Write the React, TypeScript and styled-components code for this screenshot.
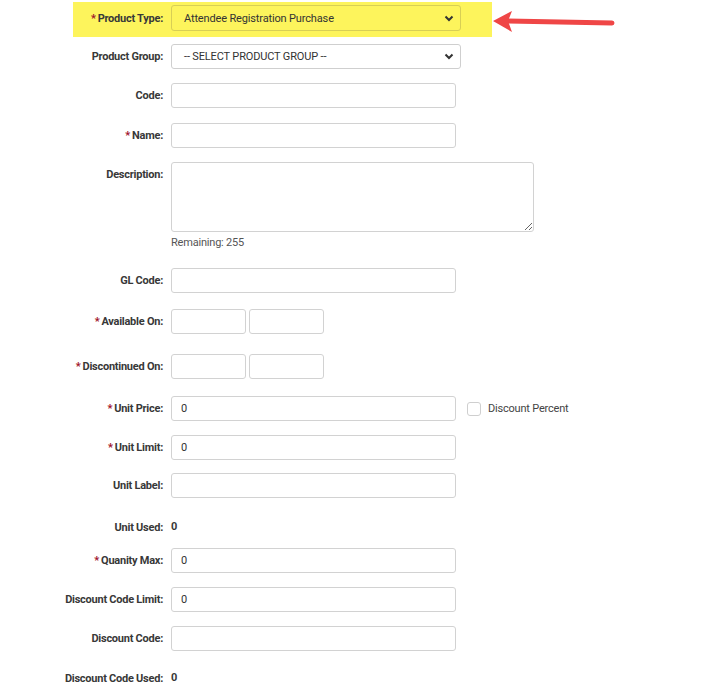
import * as React from 'react'
import styled, { createGlobalStyle } from 'styled-components'

const GlobalStyle = createGlobalStyle`
  body {
    margin: 0;
    background: #fff;
    font-family: Roboto, 'Liberation Sans', Arial, sans-serif;
  }
`

interface Field {
  label: string
  required?: boolean
  top: number
  kind: 'input' | 'select' | 'textarea' | 'dates' | 'static'
  value?: string
  extra?: 'discount'
}

const fields: Field[] = [
  { label: 'Product Group:', top: 6, kind: 'select', value: '-- SELECT PRODUCT GROUP --' },
  { label: 'Code:', top: 14, kind: 'input' },
  { label: 'Name:', required: true, top: 15, kind: 'input' },
  { label: 'Description:', top: 14, kind: 'textarea' },
  { label: 'GL Code:', top: 18, kind: 'input' },
  { label: 'Available On:', required: true, top: 16, kind: 'dates' },
  { label: 'Discontinued On:', required: true, top: 20, kind: 'dates' },
  { label: 'Unit Price:', required: true, top: 17, kind: 'input', value: '0', extra: 'discount' },
  { label: 'Unit Limit:', required: true, top: 14, kind: 'input', value: '0' },
  { label: 'Unit Label:', top: 13, kind: 'input' },
  { label: 'Unit Used:', top: 19, kind: 'static', value: '0' },
  { label: 'Quanity Max:', required: true, top: 11, kind: 'input', value: '0' },
  { label: 'Discount Code Limit:', top: 14, kind: 'input', value: '0' },
  { label: 'Discount Code:', top: 14, kind: 'input' },
  { label: 'Discount Code Used:', top: 17, kind: 'static', value: '0' }
]

const Chevron = () => (
  <svg width='10' height='7' viewBox='0 0 10 7'>
    <path d='M1.5 1.5 L5 5 L8.5 1.5' fill='none' stroke='#333' strokeWidth='2' />
  </svg>
)

const Arrow = () => (
  <ArrowSvg width='124' height='36' viewBox='0 0 124 36'>
    <path d='M14 19 L119 21' stroke='#ef4646' strokeWidth='5' strokeLinecap='round' />
    <polygon points='0,19 19,9 15,19 19,30' fill='#ef4646' />
  </ArrowSvg>
)

const Label: React.FunctionComponent<{ field: Field }> = ({ field }) => (
  <LabelText $top={field.kind === 'textarea'}>
    {field.required && <Star>*</Star>}
    {field.label}
  </LabelText>
)

const Control: React.FunctionComponent<{ field: Field }> = ({ field }) => {
  switch (field.kind) {
    case 'select':
      return (
        <Select>
          <span>{field.value}</span>
          <Chevron />
        </Select>
      )
    case 'textarea':
      return (
        <div>
          <TextArea />
          <Remaining>Remaining: 255</Remaining>
        </div>
      )
    case 'dates':
      return (
        <Dates>
          <Input $width={75} />
          <Input $width={75} />
        </Dates>
      )
    case 'static':
      return <StaticValue>{field.value}</StaticValue>
    default:
      return (
        <Inline>
          <Input $width={285} defaultValue={field.value} />
          {field.extra === 'discount' && (
            <CheckLabel>
              <Check />
              Discount Percent
            </CheckLabel>
          )}
        </Inline>
      )
  }
}

const App: React.FunctionComponent = () => (
  <Page>
    <GlobalStyle />
    <TopLine>
      <Highlight>
        <LabelText>
          <Star>*</Star>Product Type:
        </LabelText>
        <Select $highlight>
          <span>Attendee Registration Purchase</span>
          <Chevron />
        </Select>
      </Highlight>
      <Arrow />
    </TopLine>
    {fields.map(f => (
      <Row key={f.label} $top={f.top}>
        <Label field={f} />
        <Control field={f} />
      </Row>
    ))}
  </Page>
)

export { App as default }

const Page = styled.div`
  width: 706px;
  height: 691px;
  padding-top: 2px;
  box-sizing: border-box;
  overflow: hidden;
`

const TopLine = styled.div`
  display: flex;
  align-items: flex-start;
`

const Highlight = styled.div`
  display: grid;
  grid-template-columns: 90px auto;
  column-gap: 8px;
  align-items: center;
  margin-left: 73px;
  width: 419px;
  height: 35px;
  padding: 3px 0 6px;
  box-sizing: border-box;
  background: #fdf45c;
`

const ArrowSvg = styled.svg`
  display: block;
  margin-left: 1px;
`

const Row = styled.div<{ $top: number }>`
  display: grid;
  grid-template-columns: 163px auto;
  column-gap: 8px;
  align-items: center;
  margin-top: ${p => p.$top}px;
`

const LabelText = styled.div<{ $top?: boolean }>`
  text-align: right;
  font-size: 11px;
  font-weight: 700;
  letter-spacing: -0.25px;
  color: #383838;
  white-space: nowrap;
  align-self: ${p => (p.$top ? 'start' : 'center')};
  padding-top: ${p => (p.$top ? '6px' : '0')};
`

const Star = styled.span`
  color: #a0102a;
  margin-right: 2px;
  font-weight: 700;
`

const Select = styled.div<{ $highlight?: boolean }>`
  display: flex;
  align-items: center;
  justify-content: space-between;
  width: 290px;
  height: ${p => (p.$highlight ? 26 : 25)}px;
  box-sizing: border-box;
  padding: 0 6px 0 12px;
  border: 1px solid ${p => (p.$highlight ? '#d8cf55' : '#cfcfcf')};
  border-radius: 3px;
  background: ${p => (p.$highlight ? '#fdf45c' : '#fff')};
  font-size: 11px;
  letter-spacing: -0.15px;
  color: #333;
`

const Inline = styled.div`
  display: flex;
  align-items: center;
`

const Input = styled.input<{ $width: number }>`
  width: ${p => p.$width}px;
  height: 25px;
  box-sizing: border-box;
  padding: 0 9px;
  border: 1px solid #d2d2d2;
  border-radius: 3px;
  font-family: Roboto, sans-serif;
  font-size: 11px;
  color: #333;
  outline: none;
`

const Dates = styled.div`
  display: flex;
  gap: 3px;
`

const TextArea = styled.textarea`
  display: block;
  width: 363px;
  height: 70px;
  box-sizing: border-box;
  margin: 0;
  border: 1px solid #d2d2d2;
  border-radius: 3px;
  font-family: Roboto, sans-serif;
  outline: none;
`

const Remaining = styled.div`
  margin-top: 4px;
  font-size: 11px;
  line-height: 14px;
  letter-spacing: -0.2px;
  color: #555;
`

const StaticValue = styled.div`
  height: 20px;
  line-height: 20px;
  font-size: 11px;
  font-weight: 700;
  color: #383838;
`

const CheckLabel = styled.label`
  display: flex;
  align-items: center;
  gap: 7px;
  margin-left: 11px;
  font-size: 11px;
  letter-spacing: -0.2px;
  color: #444;
`

const Check = styled.span`
  width: 12px;
  height: 12px;
  border: 1px solid #cfcfcf;
  border-radius: 3px;
  background: #fff;
`
